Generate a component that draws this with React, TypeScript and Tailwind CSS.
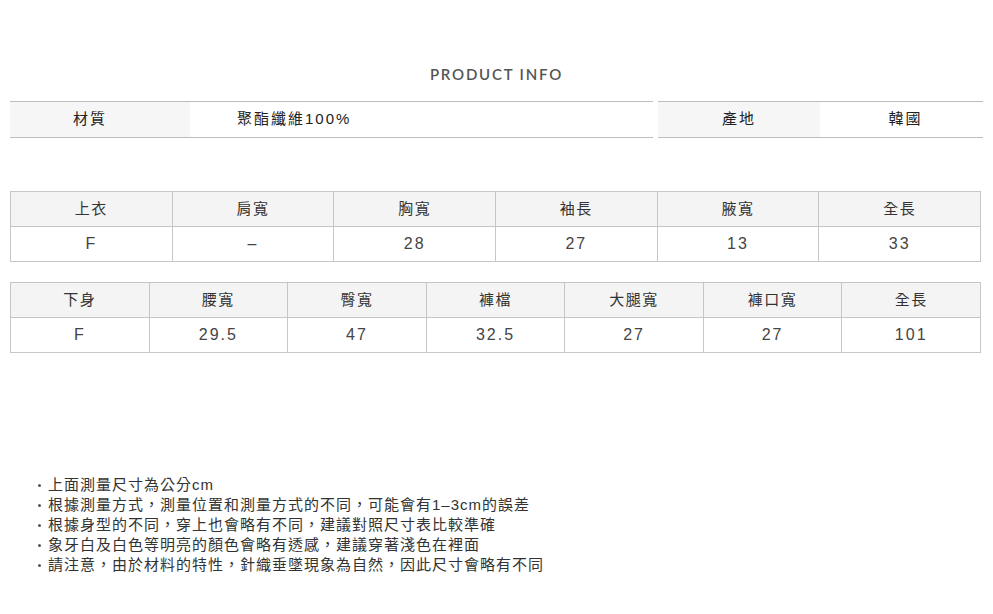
// Product info sheet: material/origin strip, two size tables and care notes
const font = { fontFamily: '"Liberation Sans","Noto Sans CJK TC",sans-serif' };

const topHead = ['上衣', '肩寬', '胸寬', '袖長', '腋寬', '全長'];
const topRow = ['F', '–', '28', '27', '13', '33'];
const bottomHead = ['下身', '腰寬', '臀寬', '褲檔', '大腿寬', '褲口寬', '全長'];
const bottomRow = ['F', '29.5', '47', '32.5', '27', '27', '101'];

const notes = [
  '上面測量尺寸為公分cm',
  '根據測量方式，測量位置和測量方式的不同，可能會有1–3cm的誤差',
  '根據身型的不同，穿上也會略有不同，建議對照尺寸表比較準確',
  '象牙白及白色等明亮的顏色會略有透感，建議穿著淺色在裡面',
  '請注意，由於材料的特性，針織垂墜現象為自然，因此尺寸會略有不同',
];

function SizeTable({ head, row, className }: { head: string[]; row: string[]; className: string }) {
  return (
    <table className={`w-[971px] table-fixed border-collapse border border-[#c6c6c6] text-[#333] ${className}`}>
      <tbody>
        <tr className="bg-[#f4f4f4]">
          {head.map((h, i) => (
            <td key={i} className="h-[35px] border border-[#c6c6c6] text-center text-[15px] tracking-[1.5px]">
              {h}
            </td>
          ))}
        </tr>
        <tr>
          {row.map((v, i) => (
            <td key={i} className="h-[35px] border border-[#c6c6c6] text-center text-[16px] tracking-[2px] text-[#444]">
              {v}
            </td>
          ))}
        </tr>
      </tbody>
    </table>
  );
}

export default function App() {
  return (
    <div className="w-[993px] h-[614px] bg-white pl-[10px] pt-[66px]" style={font}>
      <h2
        className="text-center text-[15px] font-semibold tracking-[1.8px] text-[#555] leading-[16px] pr-[10px]"
        style={{ fontFamily: 'Lato,"Liberation Sans",sans-serif' }}
      >
        PRODUCT INFO
      </h2>

      <div className="mt-[19px] flex gap-[5px] text-[15px] text-[#222] tracking-[2px]">
        <div className="flex w-[643px] h-[37px] border-y border-[#bdbdbd]">
          <div className="w-[180px] bg-[#f6f6f6] flex items-center justify-center pr-[20px]">材質</div>
          <div className="flex items-center pl-[47px]">聚酯纖維100%</div>
        </div>
        <div className="flex w-[325px] h-[37px] border-y border-[#bdbdbd]">
          <div className="w-[162px] bg-[#f6f6f6] flex items-center justify-center">產地</div>
          <div className="flex-1 flex items-center justify-center pl-[8px]">韓國</div>
        </div>
      </div>

      <SizeTable head={topHead} row={topRow} className="mt-[53px]" />
      <SizeTable head={bottomHead} row={bottomRow} className="mt-[20px]" />

      <ul className="mt-[122px] pl-[21px] text-[15px] leading-[20px] text-[#333] tracking-[1px]">
        {notes.map((n, i) => (
          <li key={i} className="whitespace-nowrap flex items-center">
            <span className="w-[17px] flex justify-center">
              <span className="w-[3px] h-[3px] rounded-full bg-[#555]" />
            </span>
            <span>{n}</span>
          </li>
        ))}
      </ul>
    </div>
  );
}
